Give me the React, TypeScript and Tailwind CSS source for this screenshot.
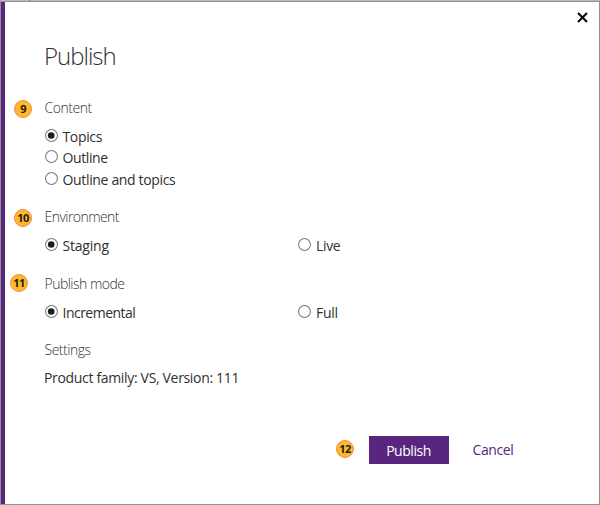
import type { ReactNode } from "react";

function Badge({ n, className = "" }: { n: number; className?: string }) {
  return (
    <span
      className={`flex h-[18px] w-[18px] shrink-0 items-center justify-center rounded-full border border-[#f58a4b] bg-[#fdb92a] font-['Open_Sans',sans-serif] text-[11px] leading-[16px] font-bold tracking-[-0.6px] text-[#1e1a12] ${className}`}
    >
      {n}
    </span>
  );
}

function Heading({ badge, children, className = "" }: { badge?: ReactNode; children: ReactNode; className?: string }) {
  return (
    <div className={`flex h-5 ${className}`}>
      <div className="w-[39.5px] shrink-0">{badge}</div>
      <h2 className="text-[14px] leading-5 font-light whitespace-nowrap text-[#333]">{children}</h2>
    </div>
  );
}

function Radio({ label, checked = false, className = "", text = "" }: { label: string; checked?: boolean; className?: string; text?: string }) {
  return (
    <label className={`flex h-5 ${className}`}>
      <svg className="mt-[2px] h-[13px] w-[13px] shrink-0" viewBox="0 0 13 13">
        <circle cx="6.5" cy="6.5" r="5.95" fill="#fff" stroke="#777" strokeWidth="1.05" />
        {checked && <circle cx="6.2" cy="6.5" r="3.3" fill="#1c1c1c" />}
      </svg>
      <span className={`text-[14px] leading-5 whitespace-nowrap ${text}`}>{label}</span>
    </label>
  );
}

export default function App() {
  return (
    <div className="flex h-[505px] w-[600px] flex-col bg-white font-['Open_Sans',sans-serif] text-[#303030]">
      <div className="flex h-px shrink-0 bg-[#bababa]">
        <div className="ml-[29px] w-px bg-[#777]" />
      </div>
      <div className="flex min-h-0 grow border border-[#929292]">
        <div className="w-1 shrink-0 bg-[#59267f]" />
        <main className="flex grow flex-col">
          <div className="flex h-[38px] justify-end pt-[10px] pr-[11px]">
            <button aria-label="Close" className="h-[11px] w-[11px]">
              <svg className="block h-[11px] w-[11px]" viewBox="0 0 11 11">
                <path d="M1 1L10 10M10 1L1 10" stroke="#080808" strokeWidth="2.1" />
              </svg>
            </button>
          </div>
          <h1 className="ml-[39px] h-8 text-[24px] leading-8 font-light tracking-[-1px]">Publish</h1>

          <Heading className="mt-[26px]" badge={<Badge n={9} className="mt-[2px] ml-[9px]" />}>
            <span className="tracking-[-0.45px]">Content</span>
          </Heading>
          <div className="mt-[9px] ml-10 flex flex-col">
            <Radio label="Topics" checked text="ml-[4.5px] tracking-[-0.35px]" />
            <Radio label="Outline" className="mt-px" text="ml-[4.5px] tracking-[-0.4px]" />
            <Radio label="Outline and topics" className="mt-[2px]" text="ml-[4.5px] tracking-[-0.34px]" />
          </div>

          <Heading className="mt-[17px]" badge={<Badge n={10} className="mt-[2px] ml-[9px]" />}>
            <span className="tracking-[-0.55px]">Environment</span>
          </Heading>
          <div className="mt-[9px] ml-10 flex">
            <Radio label="Staging" checked className="w-[253px]" text="ml-[4.5px] tracking-[-0.2px]" />
            <Radio label="Live" text="ml-[5px] tracking-[-0.35px]" />
          </div>

          <Heading className="mt-[18px]" badge={<Badge n={11} className="ml-[5px]" />}>
            <span className="tracking-[-0.52px]">Publish mode</span>
          </Heading>
          <div className="mt-[9px] ml-10 flex">
            <Radio label="Incremental" checked className="w-[253px]" text="ml-[4.5px] tracking-[-0.52px]" />
            <Radio label="Full" text="ml-[5px] tracking-[-0.3px]" />
          </div>

          <Heading className="mt-[17px]">
            <span className="tracking-[-0.48px]">Settings</span>
          </Heading>
          <p className="mt-2 ml-[39px] text-[14px] leading-5 tracking-[-0.33px]">Product family: VS, Version: 111</p>

          <div className="mt-12 ml-[331px] flex">
            <Badge n={12} className="mt-1" />
            <button className="ml-[15px] h-7 w-20 bg-[#59267f] pt-[2px] pr-px text-[14px] leading-5 tracking-[-0.45px] text-white">
              Publish
            </button>
            <button className="ml-[23.5px] h-7 text-[14px] leading-5 tracking-[-0.4px] text-[#59267f]">Cancel</button>
          </div>
        </main>
      </div>
    </div>
  );
}
